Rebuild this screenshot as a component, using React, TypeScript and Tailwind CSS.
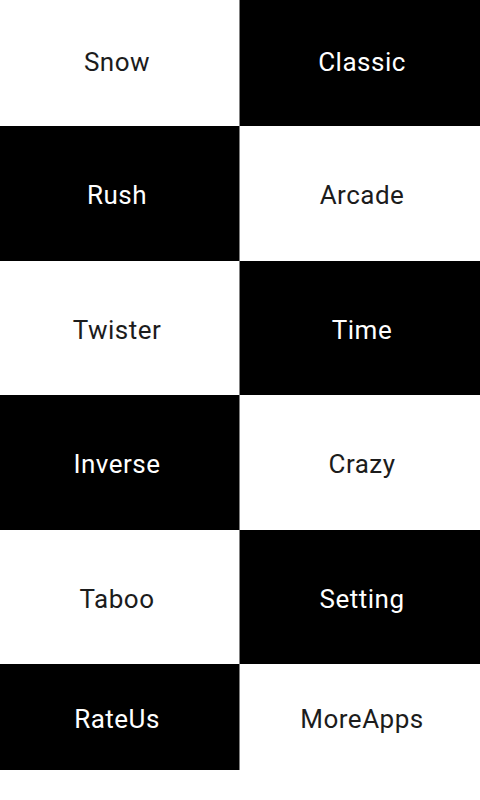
import React from 'react';

const rows: { h: string; left: string; right: string }[] = [
  { h: 'h-[126px] pb-[2px]', left: 'Snow', right: 'Classic' },
  { h: 'h-[135px] pt-[4px]', left: 'Rush', right: 'Arcade' },
  { h: 'h-[134px] pt-[4px]', left: 'Twister', right: 'Time' },
  { h: 'h-[135px] pt-[4px]', left: 'Inverse', right: 'Crazy' },
  { h: 'h-[134px] pt-[5px]', left: 'Taboo', right: 'Setting' },
  { h: 'h-[106px] pt-[4px]', left: 'RateUs', right: 'MoreApps' },
];

export default function App() {
  return (
    <div
      className="w-[480px] h-[800px] bg-white flex flex-col"
      style={{ fontFamily: 'Roboto, "Liberation Sans", sans-serif' }}
    >
      {rows.map((row, i) => {
        const leftDark = i % 2 === 1;
        return (
          <div key={row.left} className="flex">
            <div
              className={`w-[240px] ${row.h} pr-[5px] flex items-center justify-center text-[26px] tracking-[0.5px] border-r border-[#808080] ${
                leftDark ? 'bg-black text-white' : 'bg-white text-[#1c1c1c]'
              }`}
            >
              {row.left}
            </div>
            <div
              className={`w-[240px] ${row.h} pl-[4px] flex items-center justify-center text-[26px] tracking-[0.5px] ${
                leftDark ? 'bg-white text-[#1c1c1c]' : 'bg-black text-white'
              }`}
            >
              {row.right}
            </div>
          </div>
        );
      })}
    </div>
  );
}
